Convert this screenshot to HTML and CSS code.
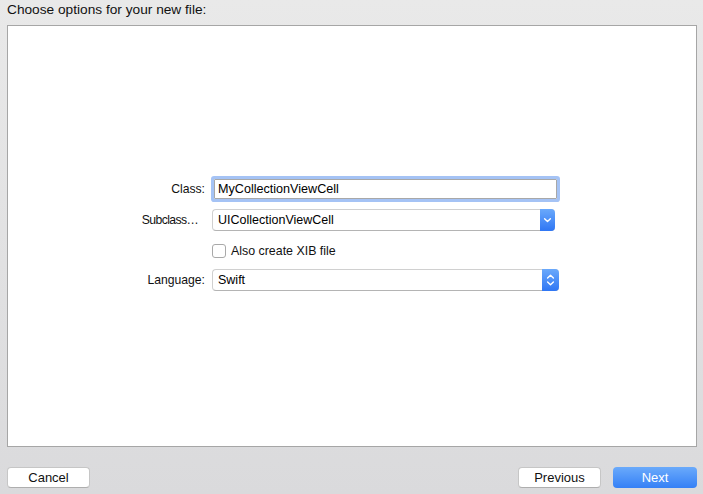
FILE: index.html
```html
<!DOCTYPE html>
<html>
<head>
<meta charset="utf-8">
<link rel="stylesheet" href="styles.css">
</head>
<body>
<div class="window">
  <div class="title">Choose options for your new file:</div>
  <div class="panel">
    <div class="form">
      <div class="row row-class">
        <div class="label">Class:</div>
        <div class="field">MyCollectionViewCell</div>
      </div>
      <div class="row row-sub">
        <div class="label label-sub">Subclass…</div>
        <div class="popup popup-sub">
          <div class="popup-text">UICollectionViewCell</div>
          <div class="popup-btn btn-sub">
            <svg width="15" height="22" viewBox="0 0 15 22"><path d="M4.6 9.8 L7.5 12.6 L10.4 9.8" fill="none" stroke="#fff" stroke-width="1.4" stroke-linecap="round" stroke-linejoin="round"/></svg>
          </div>
        </div>
      </div>
      <div class="row row-check">
        <div class="label"></div>
        <div class="checkbox"></div>
        <div class="check-label">Also create XIB file</div>
      </div>
      <div class="row row-lang">
        <div class="label">Language:</div>
        <div class="popup popup-lang">
          <div class="popup-text">Swift</div>
          <div class="popup-btn btn-lang">
            <svg width="17" height="22" viewBox="0 0 17 22"><path d="M5.6 9 L8.5 6.2 L11.4 9" fill="none" stroke="#fff" stroke-width="1.4" stroke-linecap="round" stroke-linejoin="round"/><path d="M5.6 13 L8.5 15.8 L11.4 13" fill="none" stroke="#fff" stroke-width="1.4" stroke-linecap="round" stroke-linejoin="round"/></svg>
          </div>
        </div>
      </div>
    </div>
  </div>
  <div class="footer">
    <div class="button">Cancel</div>
    <div class="right">
      <div class="button">Previous</div>
      <div class="button primary">Next</div>
    </div>
  </div>
</div>
</body>
</html>
```
FILE: styles.css
```css
html, body {
  margin: 0;
  padding: 0;
  height: 100%;
}
body {
  background: linear-gradient(#e9e9e9, #dadadc);
  font-family: "Liberation Sans", Arial, sans-serif;
  color: #111;
}
.window {
  width: 703px;
  height: 494px;
  display: flex;
  flex-direction: column;
}
.title {
  box-sizing: border-box;
  height: 25px;
  padding: 2px 7px 0;
  font-size: 13.7px;
  line-height: 16px;
  color: #111;
}
.panel {
  box-sizing: border-box;
  height: 422px;
  margin: 0 6px 0 7px;
  background: #fff;
  border: 1px solid #a6a6a6;
}
.form {
  padding-top: 153px;
  display: flex;
  flex-direction: column;
}
.row {
  display: flex;
  align-items: center;
}
.label {
  width: 197px;
  margin-right: 7px;
  text-align: right;
  font-size: 12.2px;
  color: #111;
  white-space: nowrap;
}
.label-sub {
  letter-spacing: -0.6px;
  padding-right: 7px;
  box-sizing: border-box;
}
.field {
  box-sizing: border-box;
  margin-left: 2px;
  width: 343px;
  height: 20px;
  border: 1px solid #a8a8a8;
  border-radius: 1px;
  box-shadow: 0 0 0 3px #a5c3f5;
  padding-left: 3px;
  font-size: 12.6px;
  line-height: 18px;
  color: #000;
}
.row-sub { margin-top: 10px; }
.row-check { margin-top: 13px; }
.row-lang { margin-top: 11px; }
.popup {
  box-sizing: border-box;
  height: 22px;
  display: flex;
  border: 1px solid #d0d0d0;
  border-bottom-color: #b4b4b4;
  border-right: none;
  border-radius: 4px;
  background: #fff;
}
.popup-sub { width: 343px; }
.popup-lang { width: 347px; }
.popup-text {
  flex: 1;
  padding-left: 5px;
  font-size: 12.5px;
  line-height: 20px;
  color: #000;
}
.popup-btn {
  margin: -1px 0;
  height: 22px;
  border-radius: 0 4px 4px 0;
  background: linear-gradient(#6aa9fb, #2f76f4);
  display: flex;
}
.btn-sub { width: 15px; }
.btn-lang { width: 17px; }
.checkbox {
  box-sizing: border-box;
  width: 14px;
  height: 14px;
  border: 1px solid #a9a9a9;
  border-radius: 3px;
  background: #fff;
}
.check-label {
  margin-left: 5px;
  font-size: 12.4px;
  color: #111;
}
.footer {
  flex: 1;
  display: flex;
  justify-content: space-between;
  align-items: flex-start;
  padding: 20px 6px 0 7px;
}
.right {
  display: flex;
  gap: 12px;
}
.button {
  box-sizing: border-box;
  width: 83px;
  height: 21px;
  background: #fff;
  border: 1px solid #c6c6c6;
  border-bottom-color: #aeaeae;
  border-radius: 4px;
  text-align: center;
  font-size: 13px;
  line-height: 19px;
  color: #111;
}
.primary {
  width: 84px;
  border: none;
  line-height: 21px;
  background: linear-gradient(#6aaafb, #3580f6);
  color: #fff;
}
```
